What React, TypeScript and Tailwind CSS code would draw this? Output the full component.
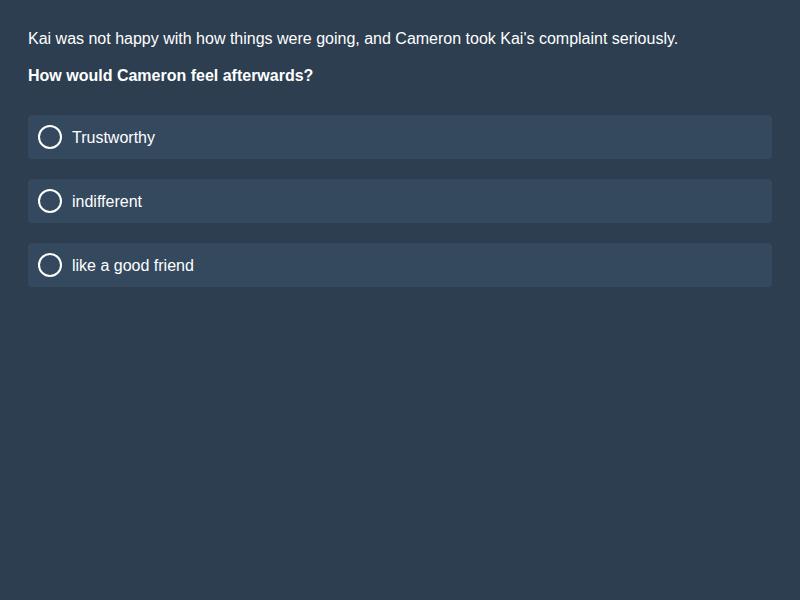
import React, { useState } from 'react';

const options = ['Trustworthy', 'indifferent', 'like a good friend'];

function App() {
  const [picked, setPicked] = useState<number | null>(null);

  return (
    <div className="min-h-[600px] w-full bg-[#2c3e50] px-[28px] pt-[30px] text-white font-['Liberation_Sans',Arial,sans-serif]">
      <p className="text-[16px] leading-[18px]">
        Kai was not happy with how things were going, and Cameron took Kai's complaint seriously.
      </p>
      <p className="mt-[19px] text-[16px] leading-[18px] font-bold">How would Cameron feel afterwards?</p>
      <div className="mt-[30px] flex flex-col gap-[20px]">
        {options.map((opt, i) => (
          <button
            key={opt}
            onClick={() => setPicked(i)}
            className="flex h-[44px] items-center gap-[10px] rounded-[4px] bg-[#34495e] px-[10px] text-left text-[16px]"
          >
            <span className="flex h-[24px] w-[24px] items-center justify-center rounded-full border-2 border-white">
              {picked === i && <span className="h-[12px] w-[12px] rounded-full bg-white" />}
            </span>
            <span className="pt-[2px]">{opt}</span>
          </button>
        ))}
      </div>
    </div>
  );
}

export default App;
